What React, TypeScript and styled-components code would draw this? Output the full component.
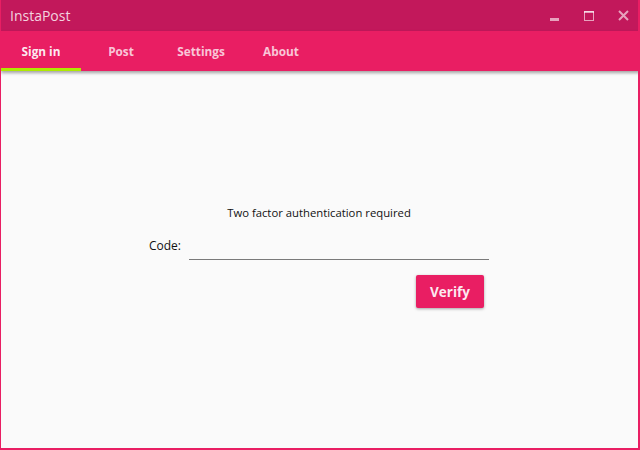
import React from 'react'
import styled, { createGlobalStyle } from 'styled-components'

const GlobalStyle = createGlobalStyle`
  html, body {
    margin: 0;
    padding: 0;
    background: #fafafa;
  }
  * { box-sizing: border-box; }
`

const tabs = ['Sign in', 'Post', 'Settings', 'About']

const App = () => {
  return (
    <>
      <GlobalStyle />
      <Window>
        <TitleBar>
          <Title>InstaPost</Title>
          <Controls>
            <CtrlButton aria-label="minimize">
              <svg width="10" height="10" viewBox="0 0 10 10">
                <rect x="0" y="7" width="9" height="3" fill="currentColor" />
              </svg>
            </CtrlButton>
            <CtrlButton aria-label="maximize">
              <svg width="10" height="10" viewBox="0 0 10 10">
                <rect x="0.5" y="0.5" width="9" height="9" fill="none" stroke="currentColor" />
                <rect x="0" y="0" width="10" height="2" fill="currentColor" />
              </svg>
            </CtrlButton>
            <CtrlButton aria-label="close">
              <svg width="11" height="11" viewBox="0 0 11 11">
                <path d="M1 1 L10 10 M10 1 L1 10" stroke="currentColor" strokeWidth="2" />
              </svg>
            </CtrlButton>
          </Controls>
        </TitleBar>
        <TabBar>
          {tabs.map((t, i) => (
            <Tab key={t} active={i === 0}>{t}</Tab>
          ))}
        </TabBar>
        <Body>
          <Form>
            <Message>Two factor authentication required</Message>
            <Row>
              <Label>Code:</Label>
              <Input />
            </Row>
            <Actions>
              <Verify>Verify</Verify>
            </Actions>
          </Form>
        </Body>
      </Window>
    </>
  )
}

export default App

const Window = styled.div`
  width: 640px;
  height: 450px;
  display: flex;
  flex-direction: column;
  border: 1px solid #e91e63;
  border-top: none;
  border-right-width: 2px;
  border-bottom-width: 2px;
  background: #fafafa;
  font-family: "Open Sans", "Noto Sans", sans-serif;
  overflow: hidden;
`

const TitleBar = styled.div`
  height: 31px;
  margin: 0 -2px 0 -1px;
  background: #c2185b;
  display: flex;
  align-items: center;
  justify-content: space-between;
  padding-left: 10px;
`

const Title = styled.div`
  color: rgba(255, 255, 255, 0.82);
  font-size: 14px;
  font-weight: 400;
`

const Controls = styled.div`
  display: flex;
  height: 100%;
`

const CtrlButton = styled.div`
  width: 34px;
  height: 100%;
  display: flex;
  align-items: center;
  justify-content: center;
  color: rgba(255, 255, 255, 0.6);
`

const TabBar = styled.div`
  height: 40px;
  margin-right: -2px;
  background: #e91e63;
  display: flex;
  box-shadow: 0 2px 3px rgba(0, 0, 0, 0.35);
  position: relative;
  z-index: 1;
`

const Tab = styled.div<{ active?: boolean }>`
  width: 80px;
  display: flex;
  align-items: center;
  justify-content: center;
  font-size: 11.8px;
  font-weight: 700;
  color: ${p => (p.active ? 'rgba(255,255,255,0.92)' : 'rgba(255,255,255,0.75)')};
  border-bottom: 3px solid ${p => (p.active ? '#aeea00' : 'transparent')};
  padding-top: 3px;
`

const Body = styled.div`
  flex: 1;
  display: flex;
  justify-content: center;
  padding-top: 133px;
`

const Form = styled.div`
  width: 340px;
  display: flex;
  flex-direction: column;
  margin-left: -1px;
`

const Message = styled.div`
  text-align: center;
  font-size: 11.3px;
  color: #111;
  line-height: 18px;
`

const Row = styled.div`
  display: flex;
  align-items: center;
  gap: 9px;
  margin-top: 8px;
`

const Label = styled.div`
  width: 31px;
  font-size: 12px;
  color: #111;
`

const Input = styled.div`
  flex: 1;
  height: 30px;
  border-bottom: 1px solid #7a7a7a;
`

const Actions = styled.div`
  display: flex;
  justify-content: flex-end;
  padding-right: 5px;
  margin-top: 15px;
`

const Verify = styled.div`
  width: 68px;
  height: 33px;
  border-radius: 2px;
  background: #e91e63;
  color: rgba(255, 255, 255, 0.92);
  font-size: 13.5px;
  font-weight: 700;
  display: flex;
  align-items: center;
  justify-content: center;
  box-shadow: 0 1px 3px rgba(0, 0, 0, 0.35);
`
